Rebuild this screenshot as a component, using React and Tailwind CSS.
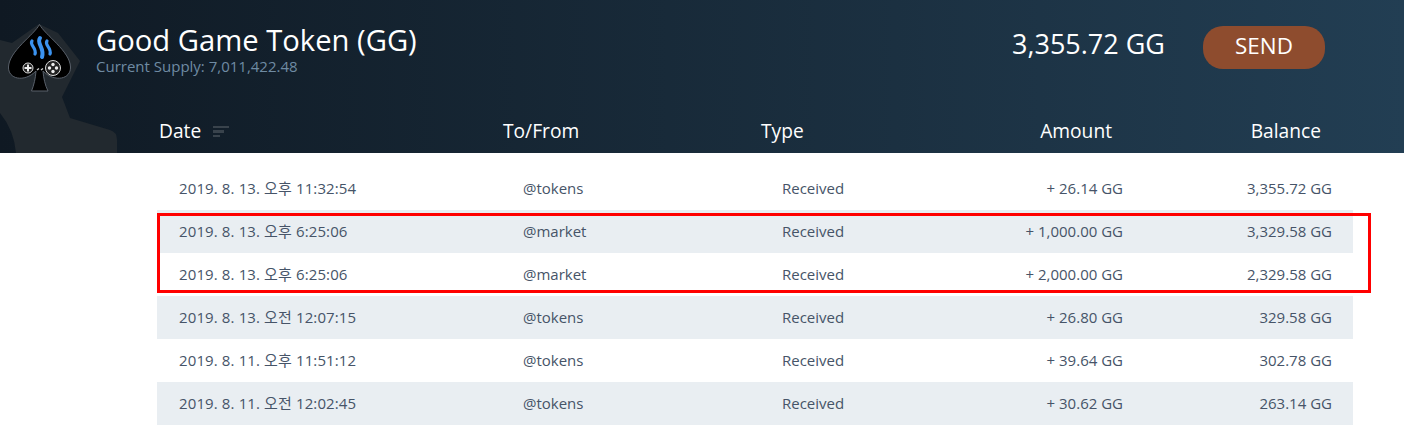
import React from 'react';

const rows = [
  { date: '2019. 8. 13. 오후 11:32:54', who: '@tokens', amount: '+ 26.14 GG', balance: '3,355.72 GG' },
  { date: '2019. 8. 13. 오후 6:25:06', who: '@market', amount: '+ 1,000.00 GG', balance: '3,329.58 GG' },
  { date: '2019. 8. 13. 오후 6:25:06', who: '@market', amount: '+ 2,000.00 GG', balance: '2,329.58 GG' },
  { date: '2019. 8. 13. 오전 12:07:15', who: '@tokens', amount: '+ 26.80 GG', balance: '329.58 GG' },
  { date: '2019. 8. 11. 오후 11:51:12', who: '@tokens', amount: '+ 39.64 GG', balance: '302.78 GG' },
  { date: '2019. 8. 11. 오전 12:02:45', who: '@tokens', amount: '+ 30.62 GG', balance: '263.14 GG' },
];

function GearBackdrop() {
  return (
    <svg className="absolute left-0 top-0" width="120" height="153" viewBox="0 0 120 153">
      <path
        d="M0 40 L12 43 L39 24 L58 33 L80 61 L62 97 L70 118 L110 130 Q117 132 117 140 L117 153 L16 153 Q14 130 0 113 Z"
        fill="#22292f"
      />
    </svg>
  );
}

function Logo() {
  return (
    <svg className="absolute left-[7px] top-[23px]" width="66" height="70" viewBox="0 0 66 70">
      <path
        d="M32.5 1.5 C38 12 63 28 63.5 44 C64 56 48 60 36 48 C36.5 55 38 62 41 68 L24.5 68 C27 62 28.5 55 29 48 C17 60 1 56 1.5 44 C2 28 27 12 32.5 1.5 Z"
        fill="#000"
        stroke="#59606a"
        strokeWidth="1"
      />
      <g fill="none" stroke="#3b93f0" strokeLinecap="round">
        <path d="M25 18 C22 22 30 25 28 31" strokeWidth="3.2" />
        <path d="M33 15 C29 20 38 25 35 34" strokeWidth="4" />
        <path d="M40 18 C37 22 45 25 43 31" strokeWidth="3.2" />
      </g>
      <circle cx="21" cy="45" r="5" fill="#222" stroke="#ddd" strokeWidth="1" />
      <path d="M21 41.5v7M17.5 45h7" stroke="#eee" strokeWidth="2" />
      <circle cx="46" cy="45" r="7.5" fill="#222" stroke="#ddd" strokeWidth="1" />
      <circle cx="46" cy="41.5" r="1.7" fill="#eee" />
      <circle cx="46" cy="48.5" r="1.7" fill="#eee" />
      <circle cx="42.5" cy="45" r="1.7" fill="#eee" />
      <circle cx="49.5" cy="45" r="1.7" fill="#eee" />
      <path d="M30 47l2-1.5M34 47l2-1.5" stroke="#ccc" strokeWidth="1.4" />
    </svg>
  );
}

function SortIcon() {
  return (
    <span className="ml-[12px] flex flex-col gap-[2px]">
      <span className="block h-[2.5px] w-4 bg-[#39434c]" />
      <span className="block h-[2.5px] w-[11px] bg-[#39434c]" />
      <span className="block h-[2.5px] w-[7px] bg-[#39434c]" />
    </span>
  );
}

export default function App() {
  return (
    <div className="relative h-[433px] w-[1404px] overflow-hidden bg-white font-['Open_Sans','Noto_Sans_CJK_KR',sans-serif]">
      <header className="relative h-[153px] bg-gradient-to-r from-[#0f1923] to-[#223e53]">
        <GearBackdrop />
        <Logo />
        <div className="relative flex h-[100px] items-start pl-[96px]">
          <div className="pt-[24px]">
            <h1 className="text-[29.2px] leading-[32px] text-white">Good Game Token (GG)</h1>
            <p className="mt-px text-[15px] leading-[18px] text-[#6f8ba3]">Current Supply: 7,011,422.48</p>
          </div>
          <div className="ml-auto flex items-start pr-[79px] pt-[25px]">
            <span className="text-[27px] leading-[37px] text-white">3,355.72 GG</span>
            <button
              type="button"
              className="ml-[38px] mt-px h-[43px] w-[122px] rounded-[20px] bg-[#8e4c2e] pb-[4px] text-[22.4px] text-white"
            >
              SEND
            </button>
          </div>
        </div>
        <div className="relative mx-[157px] grid h-[53px] w-[1196px] grid-cols-[344px_258px_191px_194px_209px] items-center pt-[10px] text-[19.2px] text-white">
          <div className="flex items-center pl-[2px]">
            Date
            <SortIcon />
          </div>
          <div className="pl-[2px]">To/From</div>
          <div className="pl-[2px]">Type</div>
          <div className="pr-[32px] text-right">Amount</div>
          <div className="pr-[32px] text-right">Balance</div>
        </div>
      </header>

      <div className="ml-[157px] w-[1196px] pt-[14px] text-[15px] text-[#465468]">
        {rows.map((row, i) => (
          <div
            key={i}
            className={`grid h-[43px] grid-cols-[344px_259px_190px_194px_209px] items-center ${
              i % 2 === 1 ? 'bg-[#e9eef2]' : 'bg-white'
            }`}
          >
            <div className="pl-[22px] tracking-[0.12px]">{row.date}</div>
            <div className="pl-[22px]">{row.who}</div>
            <div className="pl-[22px]">Received</div>
            <div className="pr-[21px] text-right">{row.amount}</div>
            <div className="pr-[21px] text-right">{row.balance}</div>
          </div>
        ))}
      </div>

      {/* annotation drawn over the table */}
      <div className="absolute left-[157px] top-[213px] h-[80px] w-[1214px] border-[3px] border-[#f00]" />
    </div>
  );
}
